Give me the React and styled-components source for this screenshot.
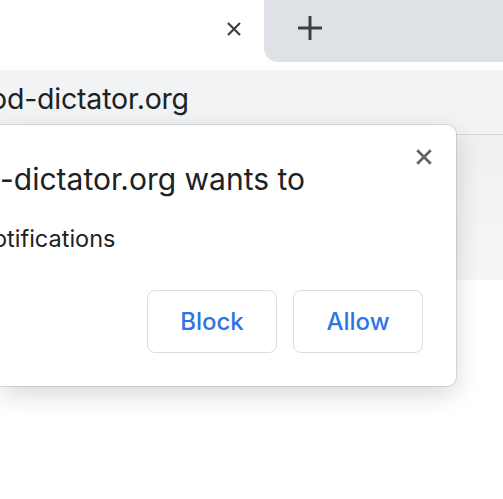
import React from "react";
import styled, { createGlobalStyle } from "styled-components";

const Global = createGlobalStyle`
  html, body { margin: 0; padding: 0; background: #ffffff; }
  body { font-family: Inter, "Noto Sans", sans-serif; -webkit-font-smoothing: antialiased; }
`;

const Screen = styled.div`
  position: relative;
  width: 503px;
  height: 499px;
  overflow: hidden;
  background: #ffffff;
`;

const TabStrip = styled.div`
  display: flex;
  height: 62px;
`;

const ActiveTab = styled.div`
  width: 264px;
  background: #ffffff;
  display: flex;
  align-items: center;
  justify-content: flex-end;
  padding-right: 22px;
  box-sizing: border-box;
`;

const TabRest = styled.div`
  flex: 1;
  background: #dee1e6;
  border-bottom-left-radius: 14px;
  display: flex;
  align-items: center;
  padding-left: 34px;
`;

const IconWrap = styled.span`
  display: inline-flex;
  width: ${(p) => p.size}px;
  height: ${(p) => p.size}px;
  color: ${(p) => p.color};
  margin-top: ${(p) => p.dy || 0}px;
`;

const Toolbar = styled.div`
  padding-top: 8px;
  border-bottom: 1px solid #d2d4d7;
  background: #ffffff;
`;

const Omnibox = styled.div`
  height: 64px;
  background: #f1f3f4;
  display: flex;
  align-items: center;
  overflow: hidden;
  padding-bottom: 8px;
  box-sizing: border-box;
`;

const Url = styled.span`
  font-size: 28.5px;
  color: #202124;
  margin-left: -10px;
  white-space: nowrap;
  letter-spacing: -0.2px;
`;

const ContentBand = styled.div`
  height: 145px;
  background: linear-gradient(180deg, #f0f0f0 0%, #f6f6f6 100%);
`;

const Popup = styled.div`
  position: absolute;
  left: 0;
  top: 125px;
  width: 456px;
  height: 261px;
  background: #ffffff;
  border-radius: 0 9px 9px 0;
  box-shadow: 0 0 0 1px rgba(0, 0, 0, 0.1), 0 8px 26px rgba(0, 0, 0, 0.16);
  box-sizing: border-box;
  display: flex;
  flex-direction: column;
  overflow: hidden;
`;

const PopupHeader = styled.div`
  display: flex;
  justify-content: space-between;
  align-items: flex-start;
  padding: 23px 23px 0 0;
`;

const Title = styled.div`
  font-size: 30px;
  color: #202124;
  margin-top: 13px;
  white-space: nowrap;
`;

const CloseButton = styled.button`
  border: none;
  background: none;
  padding: 0;
  display: inline-flex;
  cursor: pointer;
`;

const Subtitle = styled.div`
  font-size: 23.5px;
  color: #202124;
  margin-top: 27px;
  margin-left: -7px;
  white-space: nowrap;
`;

const Actions = styled.div`
  display: flex;
  justify-content: flex-end;
  gap: 16px;
  padding-right: 33px;
  margin-top: auto;
  margin-bottom: 33px;
`;

const ActionButton = styled.button`
  width: 130px;
  height: 63px;
  border: 1px solid #dadce0;
  border-radius: 8px;
  background: #ffffff;
  color: #2f74e6;
  font-family: Inter, "Noto Sans", sans-serif;
  font-size: 24px;
  font-weight: 500;
  cursor: pointer;
  padding: 0;
`;

const CloseIcon = ({ stroke = 2.4 }) => (
  <svg width="100%" height="100%" viewBox="0 0 16 16" fill="none">
    <path d="M2 2 L14 14 M14 2 L2 14" stroke="currentColor" strokeWidth={stroke} strokeLinecap="butt" />
  </svg>
);

const PlusIcon = () => (
  <svg width="100%" height="100%" viewBox="0 0 24 24" fill="none">
    <path d="M12 1 V23 M1 12 H23" stroke="currentColor" strokeWidth="3" strokeLinecap="round" />
  </svg>
);

export default function App() {
  return (
    <Screen>
      <Global />
      <TabStrip>
        <ActiveTab>
          <IconWrap size={16} color="#3c4043" dy={-4}>
            <CloseIcon stroke={2.2} />
          </IconWrap>
        </ActiveTab>
        <TabRest>
          <IconWrap size={24} color="#3c4043" dy={-7}>
            <PlusIcon />
          </IconWrap>
        </TabRest>
      </TabStrip>
      <Toolbar>
        <Omnibox>
          <Url>od-dictator.org</Url>
        </Omnibox>
      </Toolbar>
      <ContentBand />
      <Popup>
        <PopupHeader>
          <Title>-dictator.org wants to</Title>
          <CloseButton aria-label="Close">
            <IconWrap size={18} color="#5f6368">
              <CloseIcon stroke={2.4} />
            </IconWrap>
          </CloseButton>
        </PopupHeader>
        <Subtitle>otifications</Subtitle>
        <Actions>
          <ActionButton>Block</ActionButton>
          <ActionButton>Allow</ActionButton>
        </Actions>
      </Popup>
    </Screen>
  );
}
